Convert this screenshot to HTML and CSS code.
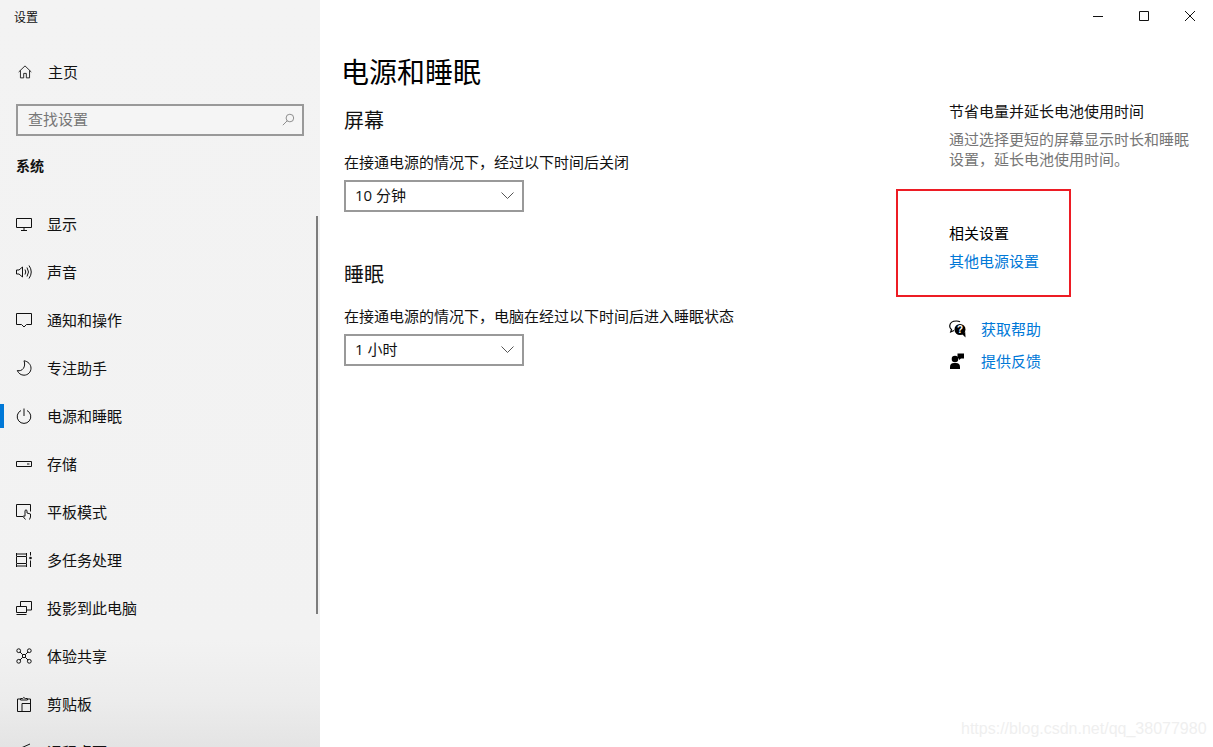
FILE: index.html
```html
<!DOCTYPE html>
<html lang="zh-CN">
<head>
<meta charset="utf-8">
<title>设置</title>
<link rel="stylesheet" href="styles.css">
</head>
<body>
<div class="app">
  <aside class="sidebar">
    <div class="app-title">设置</div>
    <div class="home-row">
      <svg class="icon home-icon" viewBox="0 0 16 16"><path d="M.8 8 8 1l7.200 7M2.800 6.300v8.400h3.700V9.600h3v5.100h3.700V6.300"/></svg>
      <span>主页</span>
    </div>
    <div class="search">
      <span>查找设置</span>
      <svg class="search-icon" viewBox="0 0 16 16"><circle cx="9.700" cy="6.200" r="4.700"/><path d="M6.400 9.600 1 15"/></svg>
    </div>
    <div class="group-title">系统</div>
    <nav class="nav">
      <div class="nav-item">
        <svg class="icon" viewBox="0 0 16 16"><path d="M.5 2.500h15v9H.5zM8 11.500v2.500M5 14.500h6"/></svg>
        <span>显示</span>
      </div>
      <div class="nav-item">
        <svg class="icon" viewBox="0 0 16 16"><path d="M.5 6v4h2.500l3.500 3V3L3 6zM9 5.500q1.500 2.500 0 5M11 3.500q3 4.500 0 9M13 1.500q4.500 6.500 0 13"/></svg>
        <span>声音</span>
      </div>
      <div class="nav-item">
        <svg class="icon" viewBox="0 0 16 16"><path d="M.5 1.500h15v11h-5L8 15l-2.500-2.500h-5z"/></svg>
        <span>通知和操作</span>
      </div>
      <div class="nav-item">
        <svg class="icon" viewBox="0 0 16 16"><path d="M8 .8c4 .5 7 3.700 7 7.400 0 3.900-3.100 7-7 7-3 0-5.700-1.900-6.700-4.700 4.800 1.500 9-3.700 6.700-9.700z"/></svg>
        <span>专注助手</span>
      </div>
      <div class="nav-item active">
        <svg class="icon" viewBox="0 0 16 16"><path d="M8 .5v7.500M5 2.500a6.800 6.800 0 1 0 6 0"/></svg>
        <span>电源和睡眠</span>
      </div>
      <div class="nav-item">
        <svg class="icon" viewBox="0 0 16 16"><path d="M.5 5.500h15v5H.5zM11 8h2.500"/></svg>
        <span>存储</span>
      </div>
      <div class="nav-item">
        <svg class="icon" viewBox="0 0 16 16"><path d="M7 12.500H.5v-12h14v7M9.500 15.500 7 12.500q.6-1 2-.3V6.500q1-1.300 2 0V9l3.500 1v3l-1 2.500"/></svg>
        <span>平板模式</span>
      </div>
      <div class="nav-item">
        <svg class="icon" viewBox="0 0 16 16"><path d="M.5 1v3M.5 2h10M10.500 1v3M.5 12v3M.5 14h10M10.500 12v3M.5 4.500h10v7H.5zM14.500 0v3.500M14.500 8.500V15"/><circle class="dot" cx="14.500" cy="6" r="1.300"/></svg>
        <span>多任务处理</span>
      </div>
      <div class="nav-item">
        <svg class="icon" viewBox="0 0 16 16"><path d="M4.500 6V1.500h11v8.500h-5M.5 6.500h10v6H.5zM.5 14.500h10"/></svg>
        <span>投影到此电脑</span>
      </div>
      <div class="nav-item">
        <svg class="icon" viewBox="0 0 16 16"><circle cx="2.700" cy="2.700" r="1.900"/><circle cx="13.300" cy="2.700" r="1.900"/><circle cx="2.700" cy="13.300" r="1.900"/><circle cx="13.300" cy="13.300" r="1.900"/><path d="M4 4l2.500 2.500M12 4 9.500 6.500M4 12l2.500-2.500M12 12 9.500 9.500M6.500 6.500h3v3h-3z"/></svg>
        <span>体验共享</span>
      </div>
      <div class="nav-item">
        <svg class="icon" viewBox="0 0 16 16"><path d="M4 3H1.500v12.500H6M12 3h2.500v5M4.500 4V2.500h2.200Q7.500.5 9.300 2.500h2.200V4zM6 7.500h8.500v8H6z"/></svg>
        <span>剪贴板</span>
      </div>
      <div class="nav-item">
        <svg class="icon" viewBox="0 0 16 16"><path d="M5 4 14 0"/></svg>
        <span>远程桌面</span>
      </div>
    </nav>
    <div class="scrollbar"></div>
  </aside>

  <main class="main">
    <div class="window-bar">
      <div class="win-btn"><svg viewBox="0 0 10 10"><path d="M0 5.500h10"/></svg></div>
      <div class="win-btn"><svg viewBox="0 0 10 10"><path d="M.5.500h9v9h-9z"/></svg></div>
      <div class="win-btn"><svg viewBox="0 0 10 10"><path d="m0 0 10 10M10 0 0 10"/></svg></div>
    </div>
    <div class="columns">
      <section class="content">
        <h1>电源和睡眠</h1>
        <h2>屏幕</h2>
        <div class="label">在接通电源的情况下，经过以下时间后关闭</div>
        <div class="select">
          <span>10 分钟</span>
          <svg viewBox="0 0 13 7"><path d="M.5.500 6.500 6.500 12.500.500"/></svg>
        </div>
        <h2 class="second">睡眠</h2>
        <div class="label">在接通电源的情况下，电脑在经过以下时间后进入睡眠状态</div>
        <div class="select">
          <span>1 小时</span>
          <svg viewBox="0 0 13 7"><path d="M.5.500 6.500 6.500 12.500.500"/></svg>
        </div>
      </section>
      <aside class="side">
        <div class="side-title">节省电量并延长电池使用时间</div>
        <p class="side-text">通过选择更短的屏幕显示时长和睡眠设置，延长电池使用时间。</p>
        <div class="side-title related">相关设置</div>
        <a class="link other">其他电源设置</a>
        <div class="help first">
          <svg viewBox="0 0 18 18"><path class="thin" d="M11 1.800Q9.500 1 7.500 1 1 1 .7 6c0 1.500.8 2.800 1.800 3.500L1.700 12l3.300-1.500"/><circle class="solid" cx="11" cy="9.500" r="5.500"/><path class="solid" d="m13 14 3.500 3.500-.3-5.500z"/><text x="11" y="13" class="q">?</text></svg>
          <a class="link">获取帮助</a>
        </div>
        <div class="help">
          <svg viewBox="0 0 18 18"><circle class="solid" cx="6" cy="7" r="3.300"/><path class="solid" d="M1 17v-2q0-4 4-4h2q4 0 4 4v2zM8.500 1.500H15v5h-3L10 8V6.500H8.500z"/></svg>
          <a class="link">提供反馈</a>
        </div>
      </aside>
    </div>
  </main>
</div>
<div class="red-box"></div>
<div class="watermark">https://blog.csdn.net/qq_38077980</div>
</body>
</html>
```

FILE: styles.css
```css
* { box-sizing: border-box; }
html, body { margin: 0; height: 100%; overflow: hidden; background: #fff; }
body {
  font-family: "Noto Sans CJK SC", "Noto Sans", sans-serif;
  font-size: 15px;
  color: #000;
  position: relative;
}
.app { display: flex; width: 1213px; height: 747px; overflow: hidden; }

.sidebar {
  position: relative;
  flex: 0 0 320px;
  height: 747px;
  overflow: hidden;
  background: linear-gradient(#f3f3f3 0, #f2f2f2 640px, #ececec 700px, #e4e4e4 747px);
}
.app-title { height: 34px; padding-left: 14px; font-size: 12px; line-height: 34px; color: #111; }
.home-row {
  display: flex; align-items: center;
  height: 48px; margin-top: 14px; padding-left: 18px;
  line-height: 20px; color: #111;
}
.home-row span { margin-left: 16px; }
.icon { width: 16px; height: 16px; flex: none; fill: none; stroke: #111; stroke-width: 1; overflow: visible; }
.icon .dot { fill: #111; stroke: none; }
.home-icon { width: 14px; height: 14px; }
.search {
  display: flex; align-items: center; justify-content: space-between;
  width: 288px; height: 32px; margin: 8px 0 0 16px; padding: 0 7px 2px 10px;
  border: 2px solid #999; background: #f5f5f5;
  color: #777; line-height: 20px;
}
.search-icon { width: 13px; height: 13px; fill: none; stroke: #777; stroke-width: 1; }
.group-title { display: flex; align-items: center; height: 64px; padding: 0 0 6px 16px; font-weight: 700; font-size: 14px; color: #111; }
.nav-item {
  position: relative;
  display: flex; align-items: center;
  height: 48px; padding-left: 16px;
  line-height: 20px; color: #111;
}
.nav-item span { margin-left: 15px; }
.nav-item.active::before {
  content: ""; position: absolute; left: 0; top: 12px;
  width: 4px; height: 24px; background: #0078d7;
}
.scrollbar { position: absolute; left: 316px; top: 216px; width: 2px; height: 398px; background: #7d7d7d; }

.main { flex: 1; min-width: 0; background: #fff; }
.window-bar { display: flex; justify-content: flex-end; height: 32px; }
.win-btn { display: flex; align-items: center; justify-content: center; width: 46px; height: 32px; }
.win-btn svg { width: 10px; height: 10px; fill: none; stroke: #111; stroke-width: 1; }
.columns { display: flex; }
.content { flex: 0 0 629px; padding-left: 24px; }
h1 { margin: 19px 0 0 -3px; font-size: 28px; font-weight: 400; line-height: 40px; color: #000; }
h2 { margin: 15px 0 0; font-size: 20px; font-weight: 400; line-height: 28px; color: #111; }
h2.second { margin-top: 48px; }
.label { margin-top: 18px; line-height: 20px; color: #111; white-space: nowrap; }
.select {
  display: flex; align-items: center; justify-content: space-between;
  width: 180px; height: 32px; margin-top: 8px; padding: 0 8px 2px 9px;
  border: 2px solid #999; line-height: 20px; color: #111;
  font-family: "Open Sans", "Noto Sans CJK SC", sans-serif;
}
.select svg { width: 13px; height: 7px; fill: none; stroke: #555; stroke-width: 1; }

.side { flex: 0 0 264px; padding-top: 69px; }
.side-title { line-height: 20px; color: #111; white-space: nowrap; }
.side-text { width: 246px; margin: 8px 0 0; line-height: 20px; color: #767676; }
.related { margin-top: 54px; color: #000; }
.link { color: #0078d7; line-height: 20px; white-space: nowrap; }
.other { display: block; margin-top: 8px; }
.help { display: flex; align-items: center; height: 32px; }
.help.first { margin-top: 42px; }
.help svg { width: 18px; height: 18px; margin-right: 14px; flex: none; overflow: visible; }
.help .solid { fill: #000; stroke: none; }
.help .thin { fill: none; stroke: #000; stroke-width: 1.200; }
.help .q { fill: #fff; font: 700 10px "Liberation Sans", sans-serif; text-anchor: middle; }

.red-box { position: absolute; left: 896px; top: 189px; width: 175px; height: 108px; border: 2px solid #ed1c24; }
.watermark {
  position: absolute; left: 961px; top: 718px;
  font: 16px/22px "Liberation Sans", Arial, sans-serif;
  color: #efefef; white-space: nowrap;
}
```
